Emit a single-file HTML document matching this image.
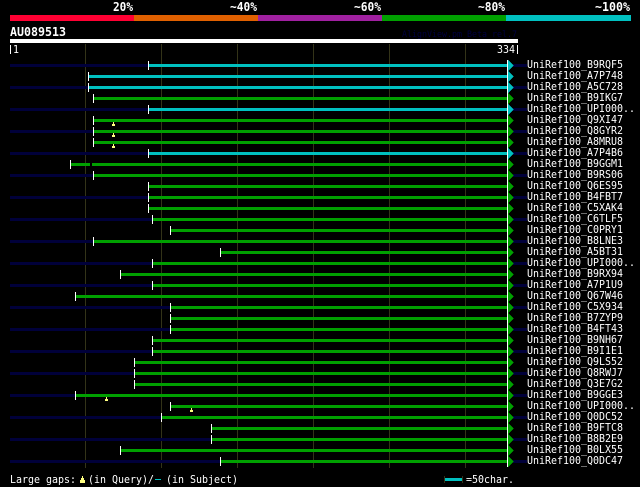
<!DOCTYPE html>
<html><head><meta charset="utf-8"><style>
html,body{margin:0;padding:0;background:#000;width:640px;height:487px;overflow:hidden}
svg{display:block}
text{font-family:"DejaVu Sans Mono",monospace;font-size:11px;fill:#fff}
.b{font-weight:bold;font-size:12px}
.f path,.f rect,.f polygon{shape-rendering:crispEdges}
</style></head><body>
<svg width="640" height="487" viewBox="0 0 640 487" xmlns="http://www.w3.org/2000/svg">
<g class="f">
<rect width="640" height="487" fill="#000"/>
<rect x="10" y="15" width="124" height="6" fill="#ff0033"/>
<rect x="134" y="15" width="124" height="6" fill="#e06000"/>
<rect x="258" y="15" width="124" height="6" fill="#a020a0"/>
<rect x="382" y="15" width="124" height="6" fill="#00a000"/>
<rect x="506" y="15" width="125" height="6" fill="#00c0c0"/>
<rect x="10" y="39" width="508" height="4" fill="#fff"/>
<path d="M85.5 44V468M161.5 44V468M237.5 44V468M313.5 44V468M389.5 44V468M465.5 44V468" stroke="#333318" fill="none"/>
<path fill="#00003a" d="M10 64H148V67H10zM10 86H88V89H10zM10 108H148V111H10zM10 130H93V133H10zM10 152H148V155H10zM10 174H93V177H10zM10 196H148V199H10zM10 218H152V221H10zM10 240H93V243H10zM10 262H152V265H10zM10 284H152V287H10zM10 306H170V309H10zM10 328H170V331H10zM10 350H152V353H10zM10 372H134V375H10zM10 394H75V397H10zM10 416H161V419H10zM10 438H211V441H10zM10 460H220V463H10zM513 64H527V67H513zM513 86H527V89H513zM513 108H527V111H513zM513 130H527V133H513zM513 152H527V155H513zM513 174H527V177H513zM513 196H527V199H513zM513 218H527V221H513zM513 240H527V243H513zM513 262H527V265H513zM513 284H527V287H513zM513 306H527V309H513zM513 328H527V331H513zM513 350H527V353H513zM513 372H527V375H513zM513 394H527V397H513zM513 416H527V419H513zM513 438H527V441H513zM513 460H527V463H513z"/>
<path fill="#00c0c0" d="M149 64H507V67H149zM89 75H507V78H89zM89 86H507V89H89zM149 108H507V111H149zM149 152H507V155H149z"/>
<path fill="#00a000" d="M94 97H507V100H94zM94 119H507V122H94zM94 130H507V133H94zM94 141H507V144H94zM71 163H507V166H71zM94 174H507V177H94zM149 185H507V188H149zM149 196H507V199H149zM149 207H507V210H149zM153 218H507V221H153zM171 229H507V232H171zM94 240H507V243H94zM221 251H507V254H221zM153 262H507V265H153zM121 273H507V276H121zM153 284H507V287H153zM76 295H507V298H76zM171 306H507V309H171zM171 317H507V320H171zM171 328H507V331H171zM153 339H507V342H153zM153 350H507V353H153zM135 361H507V364H135zM135 372H507V375H135zM135 383H507V386H135zM76 394H507V397H76zM171 405H507V408H171zM162 416H507V419H162zM212 427H507V430H212zM212 438H507V441H212zM121 449H507V452H121zM221 460H507V463H221z"/>
<rect x="90" y="163" width="2" height="3" fill="#000"/>
<path fill="none" stroke="#fff" d="M148.5 61V70M88.5 72V81M88.5 83V92M93.5 94V103M148.5 105V114M93.5 116V125M93.5 127V136M93.5 138V147M148.5 149V158M70.5 160V169M93.5 171V180M148.5 182V191M148.5 193V202M148.5 204V213M152.5 215V224M170.5 226V235M93.5 237V246M220.5 248V257M152.5 259V268M120.5 270V279M152.5 281V290M75.5 292V301M170.5 303V312M170.5 314V323M170.5 325V334M152.5 336V345M152.5 347V356M134.5 358V367M134.5 369V378M134.5 380V389M75.5 391V400M170.5 402V411M161.5 413V422M211.5 424V433M211.5 435V444M120.5 446V455M220.5 457V466M507.5 60V467"/>
<path fill="#00c0c0" d="M508 60l6 5.5-6 5.5zM508 71l6 5.5-6 5.5zM508 82l6 5.5-6 5.5zM508 104l6 5.5-6 5.5zM508 148l6 5.5-6 5.5z"/>
<path fill="#00a000" d="M508 93l6 5.5-6 5.5zM508 115l6 5.5-6 5.5zM508 126l6 5.5-6 5.5zM508 137l6 5.5-6 5.5zM508 159l6 5.5-6 5.5zM508 170l6 5.5-6 5.5zM508 181l6 5.5-6 5.5zM508 192l6 5.5-6 5.5zM508 203l6 5.5-6 5.5zM508 214l6 5.5-6 5.5zM508 225l6 5.5-6 5.5zM508 236l6 5.5-6 5.5zM508 247l6 5.5-6 5.5zM508 258l6 5.5-6 5.5zM508 269l6 5.5-6 5.5zM508 280l6 5.5-6 5.5zM508 291l6 5.5-6 5.5zM508 302l6 5.5-6 5.5zM508 313l6 5.5-6 5.5zM508 324l6 5.5-6 5.5zM508 335l6 5.5-6 5.5zM508 346l6 5.5-6 5.5zM508 357l6 5.5-6 5.5zM508 368l6 5.5-6 5.5zM508 379l6 5.5-6 5.5zM508 390l6 5.5-6 5.5zM508 401l6 5.5-6 5.5zM508 412l6 5.5-6 5.5zM508 423l6 5.5-6 5.5zM508 434l6 5.5-6 5.5zM508 445l6 5.5-6 5.5zM508 456l6 5.5-6 5.5z"/>
<path fill="#ffff80" d="M113 122h1v2h1v2h-3v-2h1zM113 133h1v2h1v2h-3v-2h1zM113 144h1v2h1v2h-3v-2h1zM106 397h1v2h1v2h-3v-2h1zM191 408h1v2h1v2h-3v-2h1zM82 476h1v2h1v2h1v3h-5v-3h1v-2h1z"/>
<path d="M444.5 476V483M462.5 476V483" stroke="#333318" fill="none"/>
<rect x="445" y="478" width="17" height="3" fill="#00c0c0"/>
<rect x="155" y="479" width="6" height="1" fill="#00c0c0"/>
<path d="M10.5 45V54M517.5 45V54" stroke="#fff" fill="none"/>
</g>
<g>
<text class="b" x="113" y="11" textLength="20" lengthAdjust="spacingAndGlyphs">20%</text>
<text class="b" x="230" y="11" textLength="27" lengthAdjust="spacingAndGlyphs">~40%</text>
<text class="b" x="354" y="11" textLength="27" lengthAdjust="spacingAndGlyphs">~60%</text>
<text class="b" x="478" y="11" textLength="27" lengthAdjust="spacingAndGlyphs">~80%</text>
<text class="b" x="595" y="11" textLength="35" lengthAdjust="spacingAndGlyphs">~100%</text>
<text class="b" x="10" y="36" textLength="56" lengthAdjust="spacingAndGlyphs">AU089513</text>
<text x="402" y="37" textLength="115" lengthAdjust="spacingAndGlyphs" style="fill:#000040;font-size:9px">AlignView.pm Beta rel.7</text>
<text x="13" y="53" textLength="6" lengthAdjust="spacingAndGlyphs">1</text>
<text x="497" y="53" textLength="18" lengthAdjust="spacingAndGlyphs">334</text>
<text x="10" y="483" textLength="66" lengthAdjust="spacingAndGlyphs">Large gaps:</text>
<text x="88" y="483" textLength="66" lengthAdjust="spacingAndGlyphs">(in Query)/</text>
<text x="166" y="483" textLength="72" lengthAdjust="spacingAndGlyphs">(in Subject)</text>
<text x="466" y="483" textLength="48" lengthAdjust="spacingAndGlyphs">=50char.</text>
<text x="527" y="68" textLength="96" lengthAdjust="spacingAndGlyphs">UniRef100_B9RQF5</text>
<text x="527" y="79" textLength="96" lengthAdjust="spacingAndGlyphs">UniRef100_A7P748</text>
<text x="527" y="90" textLength="96" lengthAdjust="spacingAndGlyphs">UniRef100_A5C728</text>
<text x="527" y="101" textLength="96" lengthAdjust="spacingAndGlyphs">UniRef100_B9IKG7</text>
<text x="527" y="112" textLength="108" lengthAdjust="spacingAndGlyphs">UniRef100_UPI000..</text>
<text x="527" y="123" textLength="96" lengthAdjust="spacingAndGlyphs">UniRef100_Q9XI47</text>
<text x="527" y="134" textLength="96" lengthAdjust="spacingAndGlyphs">UniRef100_Q8GYR2</text>
<text x="527" y="145" textLength="96" lengthAdjust="spacingAndGlyphs">UniRef100_A8MRU8</text>
<text x="527" y="156" textLength="96" lengthAdjust="spacingAndGlyphs">UniRef100_A7P4B6</text>
<text x="527" y="167" textLength="96" lengthAdjust="spacingAndGlyphs">UniRef100_B9GGM1</text>
<text x="527" y="178" textLength="96" lengthAdjust="spacingAndGlyphs">UniRef100_B9RS06</text>
<text x="527" y="189" textLength="96" lengthAdjust="spacingAndGlyphs">UniRef100_Q6ES95</text>
<text x="527" y="200" textLength="96" lengthAdjust="spacingAndGlyphs">UniRef100_B4FBT7</text>
<text x="527" y="211" textLength="96" lengthAdjust="spacingAndGlyphs">UniRef100_C5XAK4</text>
<text x="527" y="222" textLength="96" lengthAdjust="spacingAndGlyphs">UniRef100_C6TLF5</text>
<text x="527" y="233" textLength="96" lengthAdjust="spacingAndGlyphs">UniRef100_C0PRY1</text>
<text x="527" y="244" textLength="96" lengthAdjust="spacingAndGlyphs">UniRef100_B8LNE3</text>
<text x="527" y="255" textLength="96" lengthAdjust="spacingAndGlyphs">UniRef100_A5BT31</text>
<text x="527" y="266" textLength="108" lengthAdjust="spacingAndGlyphs">UniRef100_UPI000..</text>
<text x="527" y="277" textLength="96" lengthAdjust="spacingAndGlyphs">UniRef100_B9RX94</text>
<text x="527" y="288" textLength="96" lengthAdjust="spacingAndGlyphs">UniRef100_A7P1U9</text>
<text x="527" y="299" textLength="96" lengthAdjust="spacingAndGlyphs">UniRef100_Q67W46</text>
<text x="527" y="310" textLength="96" lengthAdjust="spacingAndGlyphs">UniRef100_C5X934</text>
<text x="527" y="321" textLength="96" lengthAdjust="spacingAndGlyphs">UniRef100_B7ZYP9</text>
<text x="527" y="332" textLength="96" lengthAdjust="spacingAndGlyphs">UniRef100_B4FT43</text>
<text x="527" y="343" textLength="96" lengthAdjust="spacingAndGlyphs">UniRef100_B9NH67</text>
<text x="527" y="354" textLength="96" lengthAdjust="spacingAndGlyphs">UniRef100_B9I1E1</text>
<text x="527" y="365" textLength="96" lengthAdjust="spacingAndGlyphs">UniRef100_Q9LS52</text>
<text x="527" y="376" textLength="96" lengthAdjust="spacingAndGlyphs">UniRef100_Q8RWJ7</text>
<text x="527" y="387" textLength="96" lengthAdjust="spacingAndGlyphs">UniRef100_Q3E7G2</text>
<text x="527" y="398" textLength="96" lengthAdjust="spacingAndGlyphs">UniRef100_B9GGE3</text>
<text x="527" y="409" textLength="108" lengthAdjust="spacingAndGlyphs">UniRef100_UPI000..</text>
<text x="527" y="420" textLength="96" lengthAdjust="spacingAndGlyphs">UniRef100_Q0DC52</text>
<text x="527" y="431" textLength="96" lengthAdjust="spacingAndGlyphs">UniRef100_B9FTC8</text>
<text x="527" y="442" textLength="96" lengthAdjust="spacingAndGlyphs">UniRef100_B8B2E9</text>
<text x="527" y="453" textLength="96" lengthAdjust="spacingAndGlyphs">UniRef100_B0LX55</text>
<text x="527" y="464" textLength="96" lengthAdjust="spacingAndGlyphs">UniRef100_Q0DC47</text>
</g>
</svg>
</body></html>
